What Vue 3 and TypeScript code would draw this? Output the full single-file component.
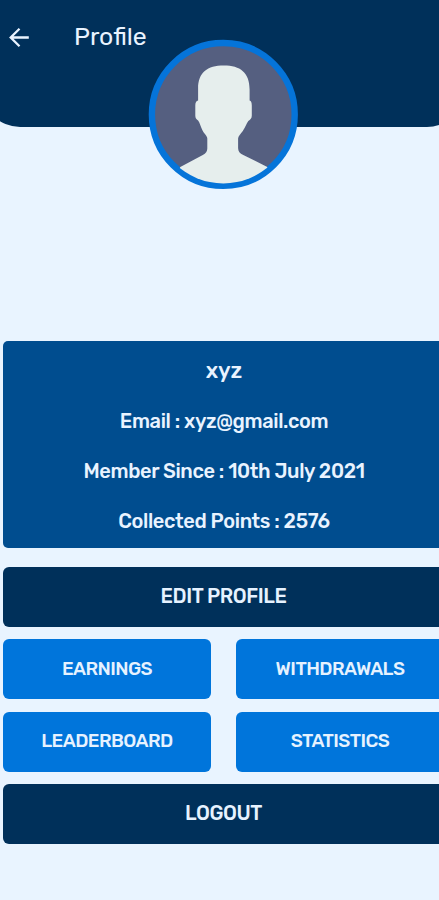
<script setup lang="ts">
interface Line {
  text: string
  kind: string
}

const details: Line[] = [
  { text: 'xyz', kind: 'name' },
  { text: 'Email : xyz@gmail.com', kind: 'email' },
  { text: 'Member Since : 10th July 2021', kind: 'since' },
  { text: 'Collected Points : 2576', kind: 'points' },
]

const actions: Line[] = [
  { text: 'EDIT PROFILE', kind: 'edit' },
  { text: 'EARNINGS', kind: 'earnings' },
  { text: 'WITHDRAWALS', kind: 'withdrawals' },
  { text: 'LEADERBOARD', kind: 'leaderboard' },
  { text: 'STATISTICS', kind: 'statistics' },
  { text: 'LOGOUT', kind: 'logout' },
]
</script>

<template>
  <main class="screen">
    <div class="page">
      <header class="header">
        <div class="bar">
          <svg class="back" viewBox="0 0 22 22" aria-hidden="true">
            <path d="M20.800 11.500H3M11.500 2.700 2.700 11.500 11.500 20.300" />
          </svg>
          <h1 class="title">Profile</h1>
        </div>
        <svg class="avatar" viewBox="-0.3 -0.4 150 150" aria-hidden="true">
          <defs>
            <clipPath id="disc"><circle cx="75" cy="75" r="69" /></clipPath>
          </defs>
          <circle cx="75" cy="75" r="71.400" class="ring" />
          <g clip-path="url(#disc)">
            <path
              class="person"
              d="M75.500 26C92 26 101.300 33 101.300 50V61C102.800 61.500 103.500 63 103.500 66V76C103.500 79 102 80 100 81.500C98 84 97 88 94.500 91.500C92.500 94.500 89.800 96.500 89.800 99V108.500C89.800 112 91.500 114 95 115.500L119 127.500L130 150H20L32 127.500L54.500 115.500C57.500 113.700 59 112 59 109V99C59 96.500 56 94.500 54 90.500C52 86.500 51.500 83 49.800 81C48 79.500 47 78.500 47 76V66C47 63 48 61.500 49.800 61V49C49.800 33 59 26 75.500 26Z"
            />
          </g>
        </svg>
      </header>

      <section class="card">
        <p v-for="line in details" :key="line.kind" :class="['line', line.kind]">
          {{ line.text }}
        </p>
      </section>

      <nav class="actions">
        <button v-for="a in actions" :key="a.kind" type="button" :class="['button', a.kind]">
          {{ a.text }}
        </button>
      </nav>
    </div>
  </main>
</template>

<style>
body {
  margin: 0;
  background: #e9f4ff;
}
</style>

<style scoped>
.screen {
  width: 100%;
  height: 900px;
  overflow: hidden;
  font-family: Rubik, Roboto, sans-serif;
  color: #e9f3ff;
  background: #e9f4ff;
}

.page {
  width: 447px;
}

.header {
  position: relative;
  box-sizing: border-box;
  height: 127px;
  margin: 0 -18px;
  padding: 0 18px;
  background: #00305a;
  border-radius: 0 0 38px 38px;
}

.bar {
  display: flex;
  align-items: center;
  height: 74px;
  padding-left: 8px;
}

.back {
  width: 22px;
  height: 22px;
  fill: none;
  stroke: #e9f3ff;
  stroke-width: 2.3;
}

.title {
  margin: 0 0 0 44px;
  font-size: 24.800px;
  font-weight: 400;
  line-height: 30px;
}

.avatar {
  position: absolute;
  top: 39px;
  left: calc(50% - 75.500px);
  width: 150px;
  height: 150px;
}

.ring {
  fill: #555f80;
  stroke: #0574d9;
  stroke-width: 6.400;
}

.person {
  fill: #e6eeed;
}

.card {
  box-sizing: border-box;
  height: 207px;
  margin: 214px 2px 0 3px;
  padding-top: 5px;
  background: #004d8f;
  border-radius: 5px;
}

.line {
  display: flex;
  align-items: center;
  justify-content: center;
  height: 50px;
  margin: 0;
  font-size: 20px;
  font-weight: 500;
  letter-spacing: -0.37px;
  white-space: nowrap;
}

.name {
  box-sizing: border-box;
  padding-bottom: 2px;
  font-size: 22px;
  letter-spacing: 0;
}

.actions {
  display: grid;
  grid-template-columns: 208px 208px;
  grid-auto-rows: 60px;
  gap: 12.400px 25px;
  margin: 19px 3px 0;
}

.button {
  display: flex;
  align-items: center;
  justify-content: center;
  padding: 0 0 2px;
  font: inherit;
  font-size: 18.800px;
  font-weight: 500;
  letter-spacing: -0.57px;
  color: #e6f2ff;
  background: #0075db;
  border: 0;
  border-radius: 6px;
  white-space: nowrap;
}

.edit,
.logout {
  grid-column: 1 / -1;
  font-size: 20px;
  letter-spacing: -0.45px;
  background: #00305a;
}
</style>
